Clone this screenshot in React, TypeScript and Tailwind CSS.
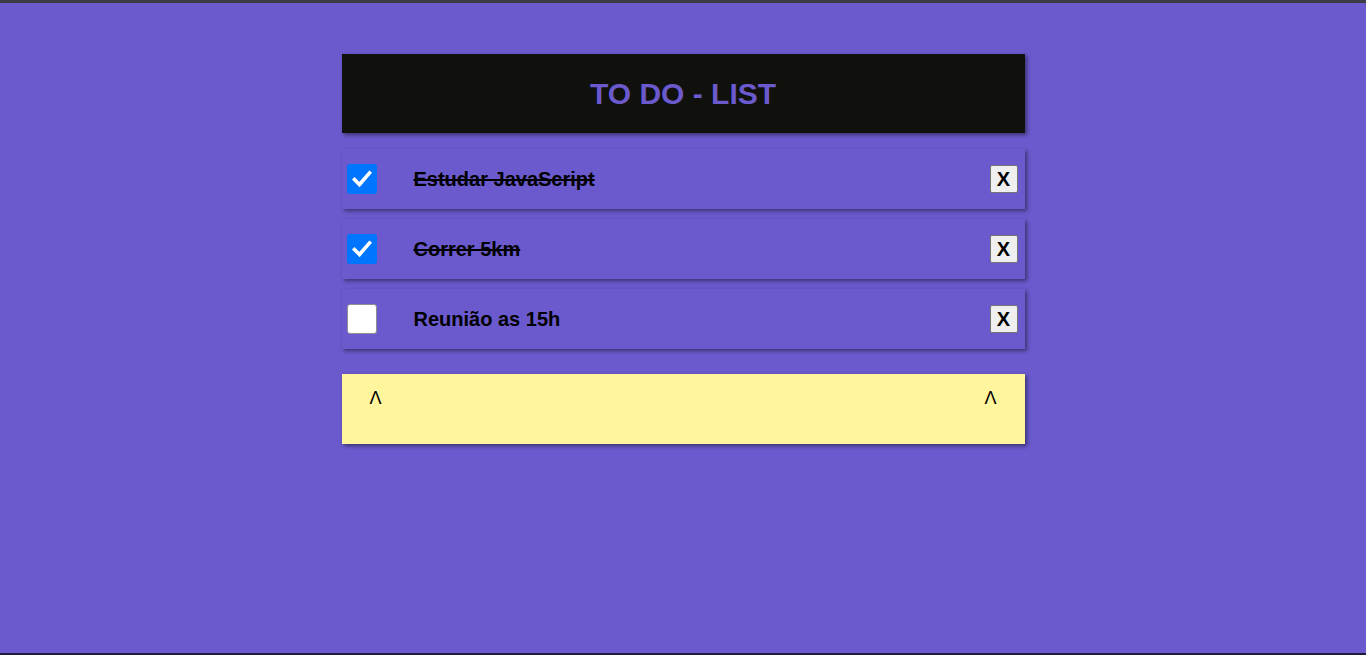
import React from "react";

type Task = { text: string; done: boolean };

const tasks: Task[] = [
  { text: "Estudar JavaScript", done: true },
  { text: "Correr 5km", done: true },
  { text: "Reunião as 15h", done: false },
];

function Check({ checked }: { checked: boolean }) {
  if (!checked) {
    return (
      <div className="w-[30px] h-[30px] rounded-[3px] bg-white border border-[#8f8f8f] shrink-0" />
    );
  }
  return (
    <div className="w-[30px] h-[30px] rounded-[3px] bg-[#0075ff] flex items-center justify-center shrink-0">
      <svg viewBox="0 0 24 24" className="w-[24px] h-[24px]" fill="none">
        <path
          d="M4.5 12.5l5 5L19.5 6"
          stroke="white"
          strokeWidth={3.6}
          strokeLinecap="square"
        />
      </svg>
    </div>
  );
}

export default function App() {
  return (
    <div
      className="w-full h-[655px] flex flex-col bg-[#6a5acd] overflow-hidden"
      style={{ fontFamily: '"Liberation Sans", Arial, sans-serif' }}
    >
      <div className="h-[3px] bg-[#3c3c44] shrink-0" />
      <div className="flex-1 flex flex-col items-center pt-[51px]">
        <div className="w-[683px] flex flex-col">
          {/* Header */}
          <div className="h-[79px] bg-[#10100c] flex items-center justify-center shadow-[2px_2px_4px_rgba(0,0,0,0.45)]">
            <h1 className="text-[30px] font-bold text-[#6a5acd] leading-none pt-[1px]">
              TO DO - LIST
            </h1>
          </div>

          {/* Tasks */}
          <div className="mt-[16px] flex flex-col gap-[10px]">
            {tasks.map((t) => (
              <div
                key={t.text}
                className="h-[60px] flex items-center pl-[5px] pr-[7px] shadow-[2px_2px_4px_rgba(0,0,0,0.45)]"
              >
                <Check checked={t.done} />
                <span
                  className={
                    "ml-[37px] text-[20px] font-bold text-black " +
                    (t.done ? "line-through decoration-2" : "")
                  }
                >
                  {t.text}
                </span>
                <button className="ml-auto w-[28px] h-[28px] bg-[#efefef] border border-[#767676] rounded-[2px] text-[20px] font-bold text-black flex items-center justify-center leading-none">
                  X
                </button>
              </div>
            ))}
          </div>

          {/* Footer note */}
          <div className="mt-[25px] h-[70px] bg-[#fff59d] flex justify-between pl-[28px] pr-[28px] pt-[18px] shadow-[2px_2px_4px_rgba(0,0,0,0.45)]">
            <span className="text-[18px] font-medium text-black leading-[13px] h-[13px]">Λ</span>
            <span className="text-[18px] font-medium text-black leading-[13px] h-[13px]">Λ</span>
          </div>
        </div>
      </div>
      <div className="h-[2px] bg-[#1e1e3c] shrink-0" />
    </div>
  );
}
